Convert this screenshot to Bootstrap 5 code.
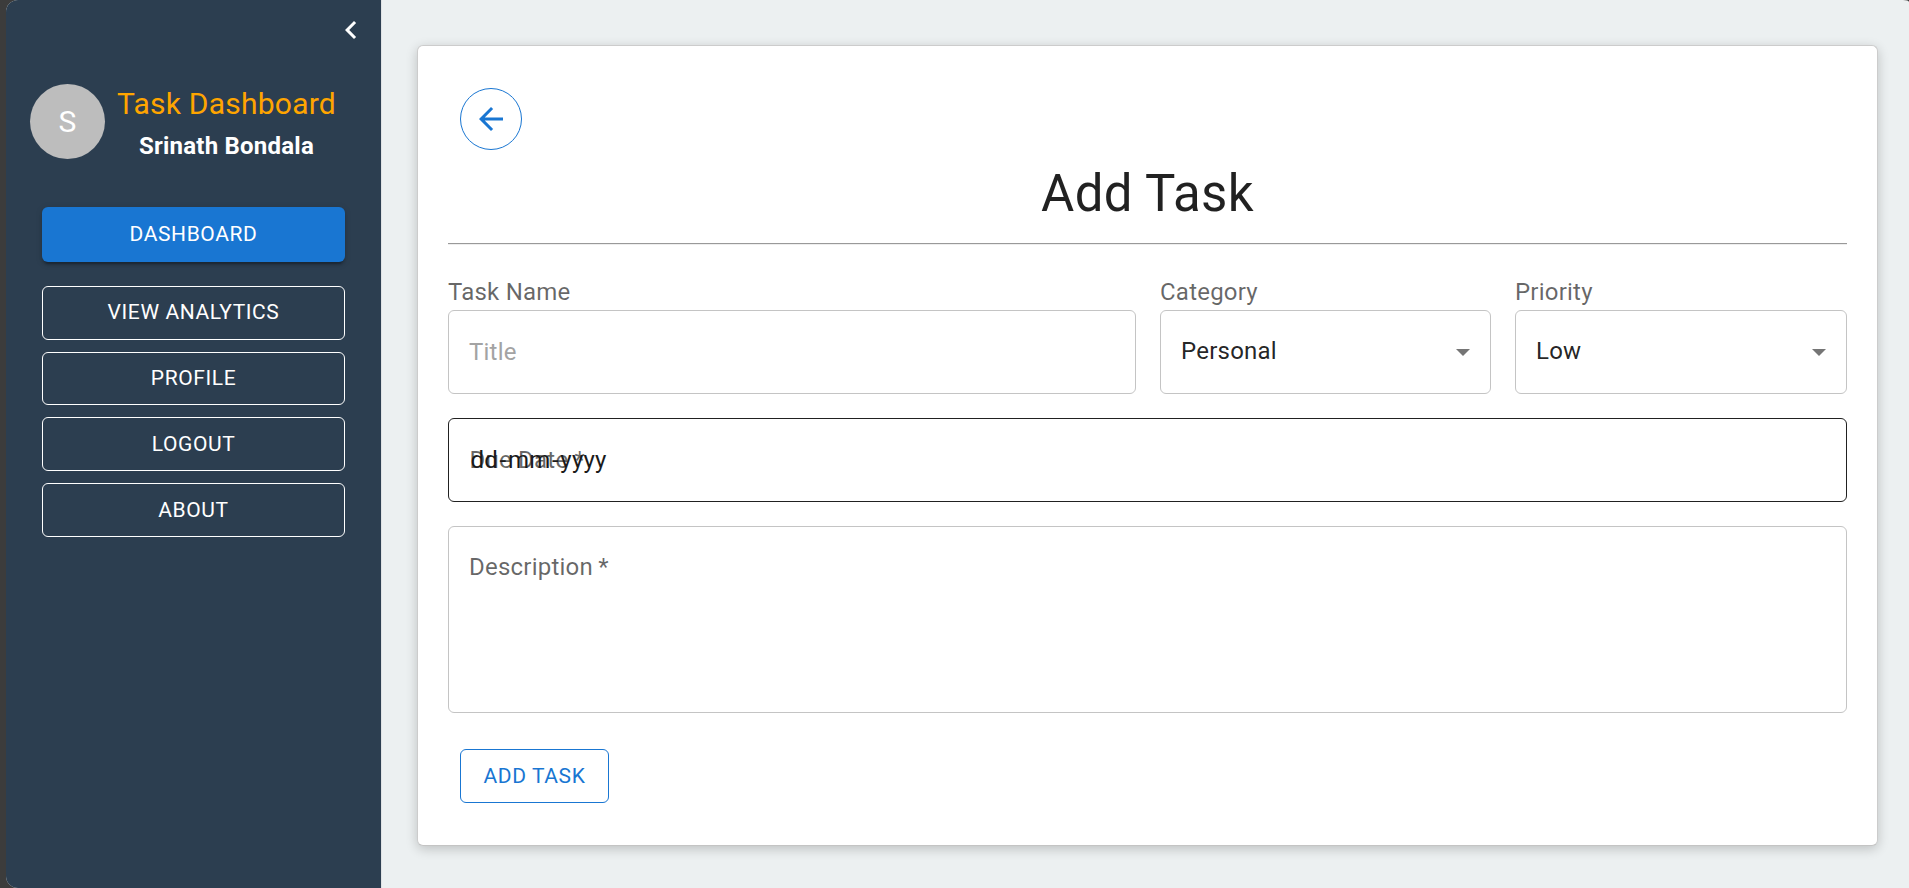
<!DOCTYPE html>
<html lang="en">
<head>
<meta charset="utf-8">
<meta name="viewport" content="width=device-width, initial-scale=1">
<title>Add Task</title>
<link href="https://cdn.jsdelivr.net/npm/bootstrap@5.3.0/dist/css/bootstrap.min.css" rel="stylesheet">
<style>
body{font-family:Roboto,"Liberation Sans",sans-serif;font-size:24px;line-height:1.5;letter-spacing:.00938em;background:#3c3c3c;color:rgba(0,0,0,.87);height:100vh;overflow:hidden}
.shell{margin-left:6px;height:888px;border-radius:12px 6px 0 12px / 12px 2px 0 12px;overflow:hidden;background:#ecf0f1}
.side{width:376px;background:#2c3e50;border-right:1px solid #dfe2e4}
.side-top{height:84px;padding:12px 12px 0 0}
.profile{padding:0 24px;height:75px}
.avatar{width:75px;height:75px;background:#bdbdbd;font-size:30px;line-height:1;letter-spacing:0}
.who{margin-left:12px}
.app-name{font-size:30px;line-height:1.6;letter-spacing:.0075em;color:orange;margin-top:-4px}
.user-name{font-weight:700;line-height:36px}
.menu{padding:48px 36px 0;gap:12px}
.mui{--bs-btn-font-size:21px;--bs-btn-line-height:1.75;--bs-btn-border-radius:6px;--bs-btn-padding-y:7.5px;--bs-btn-padding-x:22.5px;--bs-btn-font-weight:400;letter-spacing:.02857em;text-transform:uppercase}
.menu .btn-outline-light{--bs-btn-color:#fff;--bs-btn-border-color:#fff}
.menu .btn-primary{--bs-btn-bg:#1976d2;--bs-btn-padding-y:9px;border:0;margin-bottom:12px;box-shadow:0 4.5px 1.5px -3px rgba(0,0,0,.2),0 3px 3px rgba(0,0,0,.14),0 1.5px 7.5px rgba(0,0,0,.12)}
.btn-line{--bs-btn-color:#1976d2;--bs-btn-border-color:#1976d2}
.main-area{padding:45px 32px 0 35px}
.sheet{height:801px;border:1px solid #ccc;border-bottom-color:#c4c4c4;border-radius:6px;padding:42px 30px 0;--bs-card-bg:#fff;color:inherit;box-shadow:0 3px 12px rgba(0,0,0,.2)}
.back{width:62px;height:62px;margin-left:12px;border:1px solid #1976d2;color:#1976d2}
.page-title{font-size:51px;line-height:63px;letter-spacing:.00735em;font-weight:400;margin:12px 0 0}
.rule{height:2px;margin:18px 0 31px;background:linear-gradient(#999 1px,#eee 1px)}
.fields{display:grid;grid-template-columns:688px 331px 332px;gap:24px}
.lbl{display:block;color:rgba(0,0,0,.6);line-height:32px;padding-bottom:2px}
.field{height:84px;border:1px solid #c4c4c4;border-radius:6px;padding:0 20px;position:relative}
.ph{color:#a3a3a3}
.pick span{padding-bottom:2px}
.due{border-color:#212121;margin-top:24px}
.due .hint{position:absolute;left:20.5px;padding-bottom:1px;color:rgba(0,0,0,.6)}
.due .fmt{position:relative;color:#1a1a1a}
.fmt span{padding:0 1.5px}
.desc{height:187px;margin-top:24px;padding-top:22px;color:rgba(0,0,0,.6)}
.star{margin-left:-1px}
.submit{margin:36px 0 0 12px;width:149px}
</style>
</head>
<body>
<div class="shell d-flex">
  <aside class="side flex-shrink-0">
    <div class="side-top d-flex justify-content-end">
      <svg width="36" height="36" viewBox="0 0 24 24" fill="#fff"><path d="M15.41 7.41 14 6l-6 6 6 6 1.41-1.41L10.83 12z"/></svg>
    </div>
    <div class="profile d-flex">
      <div class="avatar rounded-circle text-white d-flex align-items-center justify-content-center">S</div>
      <div class="who text-center text-nowrap">
        <div class="app-name">Task Dashboard</div>
        <div class="user-name text-white">Srinath Bondala</div>
      </div>
    </div>
    <nav class="menu d-flex flex-column">
      <a class="btn btn-primary mui">Dashboard</a>
      <a class="btn btn-outline-light mui">View Analytics</a>
      <a class="btn btn-outline-light mui">Profile</a>
      <a class="btn btn-outline-light mui">Logout</a>
      <a class="btn btn-outline-light mui">About</a>
    </nav>
  </aside>
  <main class="main-area flex-grow-1">
    <div class="card sheet d-block">
      <a class="back rounded-circle d-flex align-items-center justify-content-center">
        <svg width="36" height="36" viewBox="0 0 24 24" fill="currentColor"><path d="M20 11H7.83l5.59-5.59L12 4l-8 8 8 8 1.41-1.41L7.83 13H20v-2z"/></svg>
      </a>
      <h1 class="page-title text-center">Add Task</h1>
      <div class="rule"></div>
      <div class="fields">
        <div>
          <span class="lbl">Task Name</span>
          <div class="field d-flex align-items-center"><span class="ph">Title</span></div>
        </div>
        <div>
          <span class="lbl">Category</span>
          <div class="field pick d-flex align-items-center justify-content-between"><span>Personal</span>
            <svg width="14" height="7" viewBox="0 0 14 7" fill="#757575"><path d="M0 0h14L7 7z"/></svg></div>
        </div>
        <div>
          <span class="lbl">Priority</span>
          <div class="field pick d-flex align-items-center justify-content-between"><span>Low</span>
            <svg width="14" height="7" viewBox="0 0 14 7" fill="#757575"><path d="M0 0h14L7 7z"/></svg></div>
        </div>
      </div>
      <div class="field due d-flex align-items-center"><span class="hint">Due Date *</span><div class="fmt"><span>dd</span>-<span>mm</span>-<span>yyyy</span></div></div>
      <div class="field desc">Description <span class="star">*</span></div>
      <button type="button" class="btn btn-line mui submit text-nowrap">Add Task</button>
    </div>
  </main>
</div>
<script src="https://cdn.jsdelivr.net/npm/bootstrap@5.3.0/dist/js/bootstrap.bundle.min.js"></script>
</body>
</html>
